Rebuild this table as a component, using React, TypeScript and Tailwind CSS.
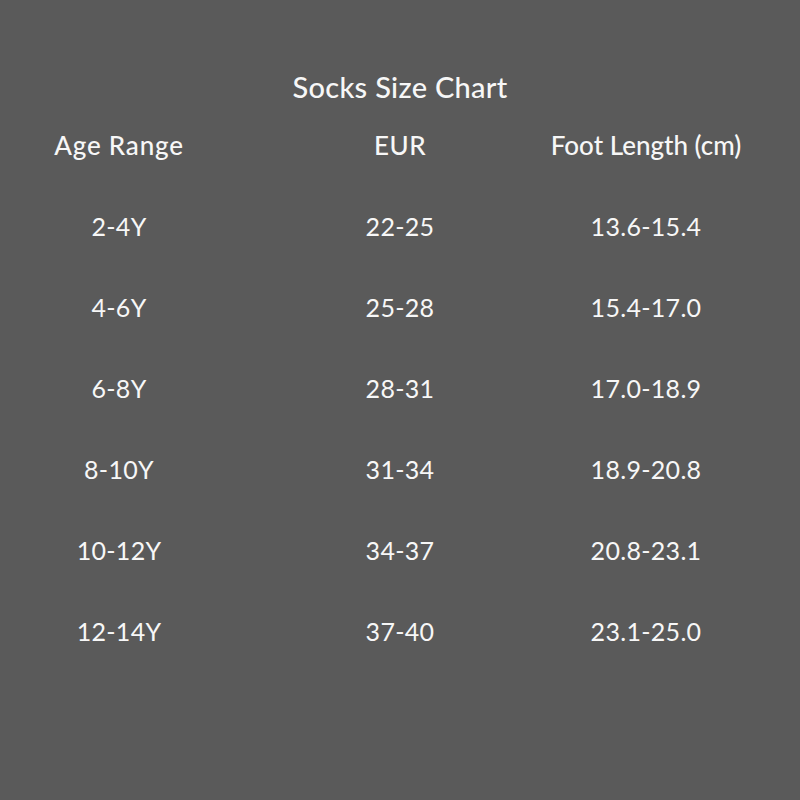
const rows = [
  ['2-4Y', '22-25', '13.6-15.4'],
  ['4-6Y', '25-28', '15.4-17.0'],
  ['6-8Y', '28-31', '17.0-18.9'],
  ['8-10Y', '31-34', '18.9-20.8'],
  ['10-12Y', '34-37', '20.8-23.1'],
  ['12-14Y', '37-40', '23.1-25.0'],
];

export default function App() {
  return (
    <div className="h-[800px] w-[800px] bg-[#5a5a5a] font-['Lato','Noto_Sans',sans-serif] text-[#f7f7f7]">
      <h1 className="flex h-[105px] items-end justify-center pb-0 text-[29px] leading-[36px] font-medium tracking-[0.3px]">
        Socks Size Chart
      </h1>
      <div className="grid grid-cols-[238px_324px_168px] text-center">
        <div className="flex h-[81px] items-center justify-center whitespace-nowrap text-[26px] font-medium tracking-[0.8px]">
          Age Range
        </div>
        <div className="flex h-[81px] items-center justify-center text-[26px] font-medium tracking-[0.5px]">
          EUR
        </div>
        <div className="flex h-[81px] items-center justify-center whitespace-nowrap text-[26px] font-medium">
          Foot Length (cm)
        </div>
        {rows.map((r) =>
          r.map((cell, i) => (
            <div
              key={r[0] + i}
              className="flex h-[81px] items-center justify-center whitespace-nowrap text-[25px] tracking-[0.3px]"
            >
              {cell}
            </div>
          )),
        )}
      </div>
    </div>
  );
}
